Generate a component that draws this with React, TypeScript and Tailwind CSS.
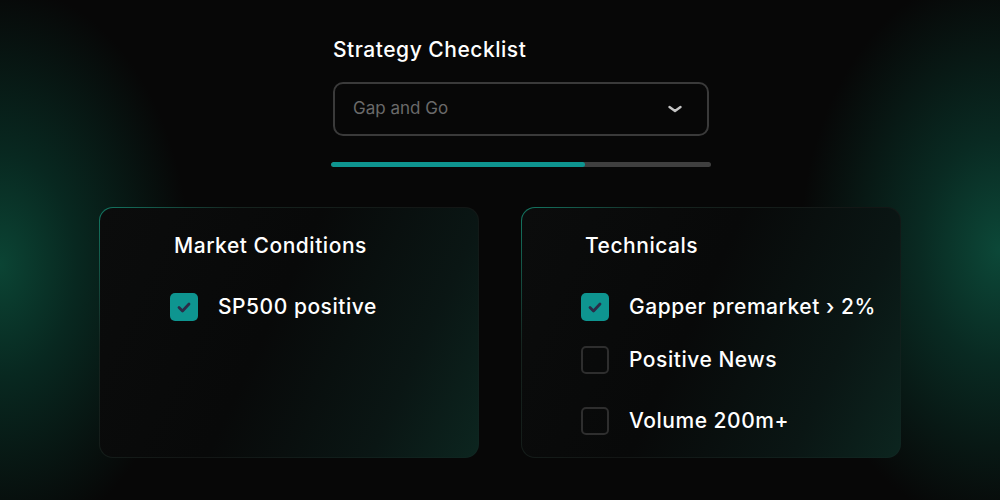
import React, { useState } from 'react'

interface Item {
  id: string
  label: string
  done: boolean
}

const font = { fontFamily: 'Inter, "Noto Sans", sans-serif' }

function Check({ checked }: { checked: boolean }) {
  if (!checked) {
    return <span className="h-[28px] w-[28px] shrink-0 rounded-[5px] border-2 border-[#2e2e2e]" />
  }
  return (
    <span className="flex h-[28px] w-[28px] shrink-0 items-center justify-center rounded-[5px] bg-[#0e9590]">
      <svg width="14" height="11" viewBox="0 0 14 11" fill="none">
        <path d="M2 5.5 L5.5 9 L12 2" stroke="#2b2c48" strokeWidth="2.8" strokeLinecap="round" strokeLinejoin="round" />
      </svg>
    </span>
  )
}

function Card({ title, items, pad }: { title: string; items: Item[]; pad: string }) {
  return (
    <div className="h-[251px] w-[380px] rounded-[14px] bg-[linear-gradient(135deg,#137a65_0%,#16241f_22%,#131615_55%,#0f2621_100%)] p-px">
      <div className={`h-full w-full rounded-[13px] bg-[linear-gradient(115deg,#0b0c0c_0%,#080909_45%,#0a1614_78%,#0c251f_100%)] pt-[24px] ${pad}`}>
        <h3 className="pl-[4px] text-[21px] font-medium leading-[28px] tracking-[0.025em] text-white">{title}</h3>
        <div className="mt-[33px] flex flex-col">
          {items.map((item, i) => (
            <div key={item.id} className={`flex items-center gap-[20px] ${i === 1 ? 'mt-[25px]' : i === 2 ? 'mt-[33px]' : ''}`}>
              <Check checked={item.done} />
              <span className="text-[21px] font-medium leading-[28px] tracking-[0.025em] text-white">{item.label}</span>
            </div>
          ))}
        </div>
      </div>
    </div>
  )
}

export default function App() {
  const [strategy] = useState('Gap and Go')

  const market: Item[] = [{ id: 'sp', label: 'SP500 positive', done: true }]
  const technicals: Item[] = [
    { id: 'gap', label: 'Gapper premarket › 2%', done: true },
    { id: 'news', label: 'Positive News', done: false },
    { id: 'vol', label: 'Volume 200m+', done: false },
  ]

  return (
    <div
      style={font}
      className="h-[500px] w-[1000px] overflow-hidden bg-[#070707] bg-[radial-gradient(ellipse_190px_280px_at_0px_265px,#0b4434_0%,#082820_40%,transparent_100%),radial-gradient(ellipse_200px_280px_at_1000px_250px,#0c4838_0%,#092a22_40%,transparent_100%)]"
    >
      <div className="ml-[331px] w-[380px] pt-[36px]">
        <h2 className="pl-[2px] text-[21px] font-medium leading-[28px] tracking-[0.025em] text-white">Strategy Checklist</h2>
        <div className="mt-[18px] ml-[2px] flex h-[54px] w-[376px] items-center justify-between rounded-[10px] border-2 border-[#3a3a3a] pl-[18px] pr-[24px]">
          <span className="text-[17px] text-[#6a6a6a]">{strategy}</span>
          <svg width="16" height="10" viewBox="0 0 16 10" fill="none">
            <path d="M2.5 3 L8 7 L13.5 3" stroke="#c4c4c4" strokeWidth="2.4" strokeLinecap="round" strokeLinejoin="round" />
          </svg>
        </div>
        <div className="mt-[26px] h-[5px] w-[380px] overflow-hidden rounded-full bg-[#3f3f3f]">
          <div className="h-full w-[254px] rounded-full bg-[#0e9590]" />
        </div>
      </div>

      <div className="mt-[40px] flex justify-center gap-[42px]">
        <Card title="Market Conditions" items={market} pad="pl-[70px]" />
        <Card title="Technicals" items={technicals} pad="pl-[59px]" />
      </div>
    </div>
  )
}
